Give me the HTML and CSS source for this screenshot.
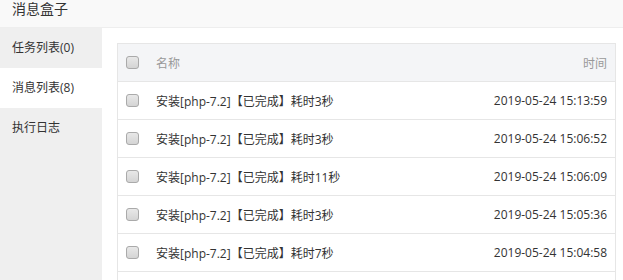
FILE: index.html
```html
<!DOCTYPE html>
<html>
<head>
<meta charset="utf-8">
<link rel="stylesheet" href="styles.css">
</head>
<body>
<div class="title">消息盒子</div>
<div class="main">
  <ul class="side">
    <li>任务列表(0)</li>
    <li class="active">消息列表(8)</li>
    <li>执行日志</li>
  </ul>
  <div class="content">
    <table class="tbl">
      <thead>
        <tr><th class="ck"><span class="box"></span></th><th class="name">名称</th><th class="time">时间</th></tr>
      </thead>
      <tbody>
        <tr><td class="ck"><span class="box"></span></td><td class="name">安装[php-7.2]【已完成】耗时3秒</td><td class="time">2019-05-24 15:13:59</td></tr>
        <tr><td class="ck"><span class="box"></span></td><td class="name">安装[php-7.2]【已完成】耗时3秒</td><td class="time">2019-05-24 15:06:52</td></tr>
        <tr><td class="ck"><span class="box"></span></td><td class="name">安装[php-7.2]【已完成】耗时11秒</td><td class="time">2019-05-24 15:06:09</td></tr>
        <tr><td class="ck"><span class="box"></span></td><td class="name">安装[php-7.2]【已完成】耗时3秒</td><td class="time">2019-05-24 15:05:36</td></tr>
        <tr><td class="ck"><span class="box"></span></td><td class="name">安装[php-7.2]【已完成】耗时7秒</td><td class="time">2019-05-24 15:04:58</td></tr>
        <tr><td class="ck"></td><td class="name"></td><td class="time"></td></tr>
      </tbody>
    </table>
  </div>
</div>
</body>
</html>
```
FILE: styles.css
```css
html, body {
  margin: 0;
  padding: 0;
  background: #fff;
  overflow: hidden;
}
body {
  width: 623px;
  height: 280px;
  font-family: "Open Sans", "Noto Sans CJK SC", sans-serif;
  color: #333;
  font-size: 12px;
}
.title {
  height: 27px;
  line-height: 18px;
  padding-left: 12px;
  font-size: 14px;
  color: #333;
  background: #f9f9f9;
  border-bottom: 1px solid #eee;
}
.main {
  display: flex;
  height: 252px;
  overflow: hidden;
}
.side {
  list-style: none;
  margin: 0;
  padding: 0;
  width: 102px;
  flex: none;
  background: #efefef;
}
.side li {
  height: 40px;
  line-height: 39px;
  padding-left: 12px;
  font-size: 12px;
  color: #333;
}
.side li.active {
  background: #fff;
}
.content {
  flex: 1;
  padding: 15px 7px 0 15px;
}
.tbl {
  width: 100%;
  border-collapse: collapse;
  border: 1px solid #e6e6e6;
}
.tbl th, .tbl td {
  height: 37px;
  padding: 0;
  border-bottom: 1px solid #e6e6e6;
  font-weight: normal;
  text-align: left;
  white-space: nowrap;
}
.tbl thead th {
  background: #f4f5f7;
  color: #999;
}
.tbl td {
  color: #333;
}
.ck {
  width: 30px;
  padding-left: 8px !important;
}
.box {
  display: block;
  width: 11px;
  height: 11px;
  border: 1px solid #aaa;
  border-radius: 3px;
  background: linear-gradient(#e8e8e8, #d4d4d4);
}
.time {
  text-align: right !important;
  padding-right: 8px !important;
}
```
